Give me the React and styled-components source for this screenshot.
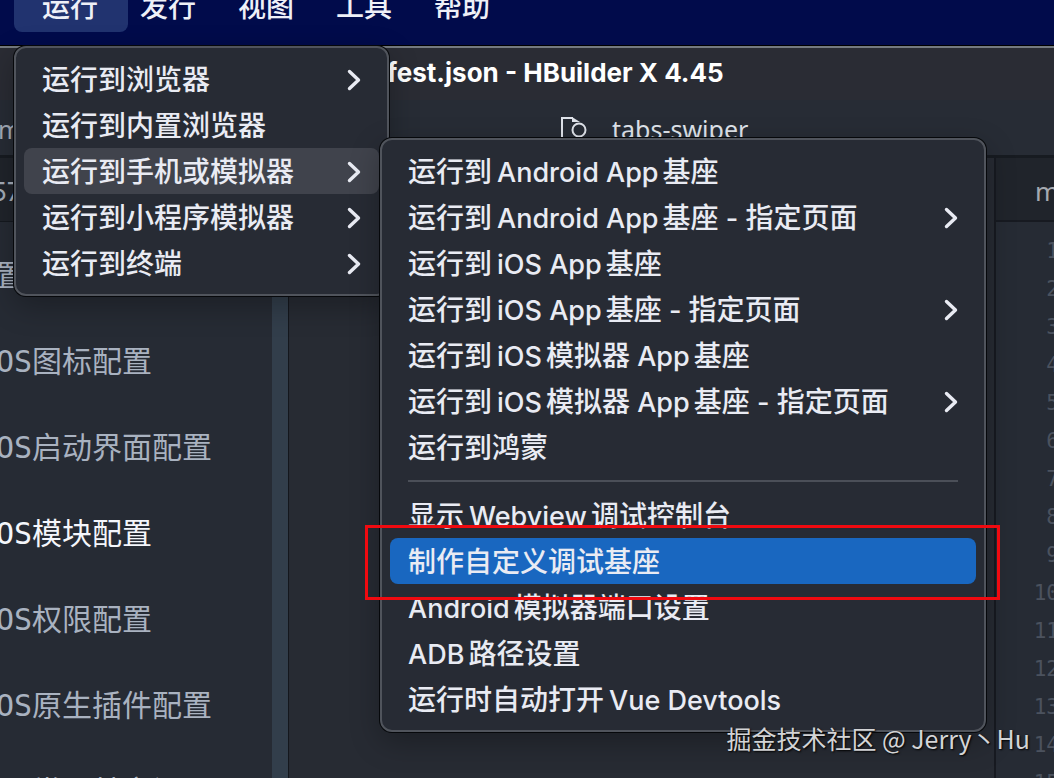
import React from 'react';
import styled, { createGlobalStyle } from 'styled-components';

const ui = '"Inter", "Noto Sans CJK SC", sans-serif';
const mono = '"DejaVu Sans Mono", "Noto Sans CJK SC", monospace';

const GlobalStyle = createGlobalStyle`
  *, *::before, *::after { box-sizing: border-box; }
  html, body, #root { height: 100%; }
  body { margin: 0; overflow: hidden; background: #262b34; font-family: ${ui}; }
  button { border: 0; margin: 0; background: none; font: inherit; color: inherit; cursor: default; }
`;

const Desktop = styled.div`
  position: relative;
  display: flex;
  flex-direction: column;
  height: 100%;
  overflow: hidden;
`;

const MenuBar = styled.nav`
  flex: none;
  display: flex;
  height: 46px;
  padding-left: 14px;
  background: #010b4b;
  border-bottom: 1px solid #000;
  overflow: hidden;
`;

const MenuBarButton = styled.button`
  height: 44px;
  margin-top: -12px;
  padding: ${p => (p.$open ? '0 30px 6px 28px' : '0 0 6px')};
  margin-right: ${p => (p.$open ? 12 : 42)}px;
  border-radius: 8px;
  font-size: 28px;
  line-height: 36px;
  font-weight: 500;
  color: #eef0f7;
  background: ${p => (p.$open ? '#21336f' : 'transparent')};
`;

const Window = styled.main`
  flex: 1;
  min-height: 0;
  display: flex;
  flex-direction: column;
  border-top: 2px solid #747a80;
  background: #262b34;
`;

const TitleBar = styled.header`
  flex: none;
  height: 52px;
  padding-left: 387px;
  background: #2a2c34;
  color: #fff;
  font-size: 26px;
  line-height: 50px;
  font-weight: 700;
  white-space: nowrap;
`;

const FileTabs = styled.div`
  flex: none;
  display: flex;
  align-items: center;
  height: 58px;
  gap: 24px;
  padding-top: 2px;
  border-bottom: 3px solid #171b21;
  background: #272c35;
  color: #dfe3ea;
  font-family: "Noto Sans", "Noto Sans CJK SC", sans-serif;
  font-size: 25px;
`;

const ClippedLabel = styled.span`
  width: 538px;
  margin-left: -2px;
  color: #a5adb9;
`;

const Columns = styled.div`
  flex: 1;
  min-height: 0;
  display: flex;
`;

const Sidebar = styled.aside`
  flex: none;
  display: flex;
  flex-direction: column;
  width: 272px;
  overflow: hidden;
`;

const SidebarTab = styled.div`
  flex: none;
  height: 64px;
  margin-bottom: 11px;
  background: #20242b;
  border-bottom: 1px solid #15191f;
  color: #a5adb9;
  font-size: 26px;
  line-height: 68px;
  text-indent: -9px;
`;

const SidebarLink = styled.a`
  flex: none;
  height: 86px;
  margin-left: -4px;
  font-family: ${mono};
  font-size: 30px;
  line-height: 86px;
  white-space: nowrap;
  text-decoration: none;
  color: ${p => (p.$active ? '#f4f6fb' : '#a9b2c0')};
`;

const ScrollTrack = styled.div`
  flex: none;
  width: 17px;
  background: #323e4b;
  border-right: 1px solid #14171d;
`;

const Form = styled.section`
  flex: 1;
  background: #272b33;
`;

const Editor = styled.section`
  flex: none;
  width: 60px;
  border-left: 2px solid #171a21;
  overflow: hidden;
`;

const EditorTab = styled.div`
  height: 64px;
  padding-left: 39px;
  background: #20242b;
  border-bottom: 2px solid #171a21;
  color: #a5a9b0;
  font-family: "Noto Sans", sans-serif;
  font-size: 26px;
  line-height: 66px;
`;

const LineNumbers = styled.ol`
  width: 63px;
  margin: 0;
  padding: 10px 0 0;
  list-style: none;
  text-align: right;
  font-family: ${mono};
  font-size: 21px;
  line-height: 38px;
  color: #4b525e;
`;

const Menu = styled.div`
  position: absolute;
  left: ${p => p.$left}px;
  top: ${p => p.$top}px;
  width: ${p => p.$width}px;
  padding: 8px;
  border: 2px solid #50545c;
  border-radius: 12px;
  background: #272b34;
  box-shadow: 0 0 0 1px #06080b, 0 10px 30px rgba(0, 0, 0, 0.28);
`;

const Item = styled.button`
  display: flex;
  align-items: center;
  justify-content: space-between;
  width: 100%;
  height: 46px;
  padding: 2px 18px 0;
  border-radius: 8px;
  font-size: 28px;
  line-height: 44px;
  font-weight: 500;
  text-align: left;
  white-space: nowrap;
  color: #e9ebf3;
  background: ${p => ({ hover: '#40434c', active: '#1967c0' }[p.$state] || 'transparent')};
`;

const Latin = styled.span`
  font-size: 27px;
  margin-left: ${p => (p.$before ? 5 : 0)}px;
  margin-right: ${p => (p.$after ? 4 : 0)}px;
`;

const Divider = styled.hr`
  height: 2px;
  margin: 10px 18px;
  border: 0;
  background: #4b4f58;
`;

const Highlight = styled.div`
  position: absolute;
  left: 365px;
  top: 525px;
  width: 635px;
  height: 75px;
  border: 3px solid #f00a10;
`;

const Watermark = styled.div`
  position: absolute;
  right: 24px;
  bottom: 22px;
  color: #d3d4d6;
  font-family: "Noto Sans CJK SC", sans-serif;
  font-size: 25px;
  line-height: 36px;
  text-shadow: 1px 1px 2px #000;
`;

const Chevron = () => (
  <svg width="14" height="22" viewBox="0 0 14 22" fill="none" stroke="#e9ebf3" strokeWidth="3.4" strokeLinecap="round" strokeLinejoin="round">
    <path d="M2.5 2.5 11.5 11 2.5 19.5" />
  </svg>
);

const FileIcon = () => (
  <svg width="28" height="26" viewBox="0 0 28 26" fill="none" stroke="#dfe3ea" strokeWidth="2">
    <path d="M2 26V2h11" />
    <path d="M12 1v5h8z" fill="#dfe3ea" stroke="none" />
    <circle cx="19" cy="14" r="6.5" />
  </svg>
);

const cjk = /[\u4e00-\u9fff]/;

const Label = ({ text }) => {
  const parts = text.match(/[\u4e00-\u9fff]+|[^\u4e00-\u9fff]+/g);
  return (
    <span>
      {parts.map((part, i) =>
        cjk.test(part) ? (
          part
        ) : (
          <Latin key={i} $before={i > 0 && part[0] !== ' '} $after={i < parts.length - 1 && !part.endsWith(' ')}>
            {part}
          </Latin>
        )
      )}
    </span>
  );
};

const MenuItem = ({ text, sub, state }) => (
  <Item role="menuitem" aria-haspopup={sub ? 'menu' : undefined} $state={state}>
    <Label text={text} />
    {sub && <Chevron />}
  </Item>
);

const bar = ['运行', '发行', '视图', '工具', '帮助'];
const runMenu = [
  { text: '运行到浏览器', sub: true },
  { text: '运行到内置浏览器' },
  { text: '运行到手机或模拟器', sub: true, state: 'hover' },
  { text: '运行到小程序模拟器', sub: true },
  { text: '运行到终端', sub: true },
];
const deviceMenu = [
  { text: '运行到Android App基座' },
  { text: '运行到Android App基座 - 指定页面', sub: true },
  { text: '运行到iOS App基座' },
  { text: '运行到iOS App基座 - 指定页面', sub: true },
  { text: '运行到iOS模拟器 App基座' },
  { text: '运行到iOS模拟器 App基座 - 指定页面', sub: true },
  { text: '运行到鸿蒙' },
];
const toolMenu = [
  { text: '显示Webview调试控制台' },
  { text: '制作自定义调试基座', state: 'active' },
  { text: 'Android模拟器端口设置' },
  { text: 'ADB路径设置' },
  { text: '运行时自动打开Vue Devtools' },
];
const sections = ['置', 'OS图标配置', 'OS启动界面配置', 'OS模块配置', 'OS权限配置', 'OS原生插件配置', 'OS常用其它设置'];

export default function App() {
  return (
    <Desktop>
      <GlobalStyle />
      <MenuBar>
        {bar.map((name, i) => (
          <MenuBarButton key={name} $open={i === 0}>{name}</MenuBarButton>
        ))}
      </MenuBar>
      <Window>
        <TitleBar>fest.json - HBuilder X 4.45</TitleBar>
        <FileTabs>
          <ClippedLabel>m</ClippedLabel>
          <FileIcon />
          <span>tabs-swiper</span>
        </FileTabs>
        <Columns>
          <Sidebar>
            <SidebarTab>57</SidebarTab>
            {sections.map(name => (
              <SidebarLink key={name} href="#" $active={name === 'OS模块配置'}>{name}</SidebarLink>
            ))}
          </Sidebar>
          <ScrollTrack />
          <Form />
          <Editor>
            <EditorTab>m</EditorTab>
            <LineNumbers>
              {Array.from({ length: 15 }, (_, i) => <li key={i}>{i + 1}</li>)}
            </LineNumbers>
          </Editor>
        </Columns>
      </Window>
      <Menu role="menu" $left={14} $top={46} $width={375}>
        {runMenu.map(item => <MenuItem key={item.text} {...item} />)}
      </Menu>
      <Menu role="menu" $left={380} $top={138} $width={606}>
        {deviceMenu.map(item => <MenuItem key={item.text} {...item} />)}
        <Divider />
        {toolMenu.map(item => <MenuItem key={item.text} {...item} />)}
      </Menu>
      <Highlight />
      <Watermark>掘金技术社区 @ Jerry丶Hu</Watermark>
    </Desktop>
  );
}
